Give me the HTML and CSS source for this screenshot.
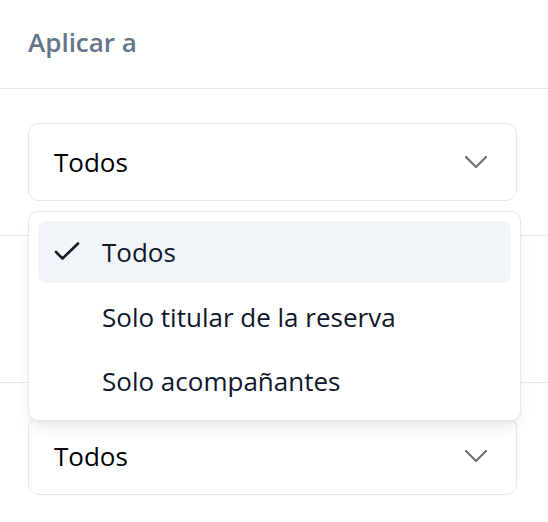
FILE: index.html
```html
<!DOCTYPE html>
<html lang="es">
<head>
<meta charset="utf-8">
<link rel="stylesheet" href="styles.css">
</head>
<body>
<div class="panel">
  <div class="header">Aplicar a</div>
  <div class="section">
    <div class="select">
      <span class="value">Todos</span>
      <svg class="chev" width="22" height="12" viewBox="0 0 22 12"><path d="M1 1 L11 11 L21 1" fill="none" stroke="#6b7280" stroke-width="2.2" stroke-linecap="round" stroke-linejoin="round"/></svg>
    </div>
    <div class="menu">
      <div class="item active">
        <svg class="check" width="26" height="20" viewBox="0 0 26 20"><path d="M2 10 L8.5 16.5 L24 1.5" fill="none" stroke="#111827" stroke-width="2.6" stroke-linecap="round" stroke-linejoin="round"/></svg>
        <span>Todos</span>
      </div>
      <div class="item"><span>Solo titular de la reserva</span></div>
      <div class="item"><span>Solo acompañantes</span></div>
    </div>
  </div>
  <div class="section">
    <div class="select"></div>
  </div>
  <div class="section">
    <div class="select">
      <span class="value">Todos</span>
      <svg class="chev" width="22" height="12" viewBox="0 0 22 12"><path d="M1 1 L11 11 L21 1" fill="none" stroke="#6b7280" stroke-width="2.2" stroke-linecap="round" stroke-linejoin="round"/></svg>
    </div>
  </div>
</div>
</body>
</html>
```
FILE: styles.css
```css
* { box-sizing: border-box; }
html, body { margin: 0; padding: 0; background: #fff; }
body {
  font-family: "Open Sans", "Noto Sans", sans-serif;
  width: 548px;
  height: 522px;
  overflow: hidden;
}
.panel { display: flex; flex-direction: column; }
.header {
  height: 89px;
  padding: 24px 28px 0;
  font-size: 26px;
  line-height: 36px;
  font-weight: 600;
  color: #64748b;
  border-bottom: 1px solid #e2e8f0;
}
.section {
  position: relative;
  padding: 34px 31px 34px 28px;
  border-bottom: 1px solid #e2e8f0;
}
.select {
  height: 78px;
  border: 1.5px solid #e2e8f0;
  border-radius: 11px;
  display: flex;
  align-items: center;
  justify-content: space-between;
  padding: 0 29px 0 25px;
  font-size: 26px;
  color: #000;
}
.value { line-height: 1; }
.chev { display: block; }
.menu {
  position: absolute;
  left: 28px;
  top: 122px;
  width: 493px;
  height: 210px;
  background: #fff;
  border: 1.5px solid #e2e8f0;
  border-radius: 10px;
  padding: 9px 9px 8px;
  box-shadow: 0 10px 15px -3px rgba(0,0,0,0.08), 0 4px 6px -4px rgba(0,0,0,0.08);
  z-index: 10;
  display: flex;
  flex-direction: column;
  gap: 2px;
}
.item {
  height: 62px;
  border-radius: 8px;
  display: flex;
  align-items: center;
  padding-left: 64px;
  position: relative;
  font-size: 26px;
  color: #0f172a;
}
.item + .item { padding-top: 2px; }
.item.active { background: #f1f5f9; }
.check { position: absolute; left: 16px; top: 21px; }
```
